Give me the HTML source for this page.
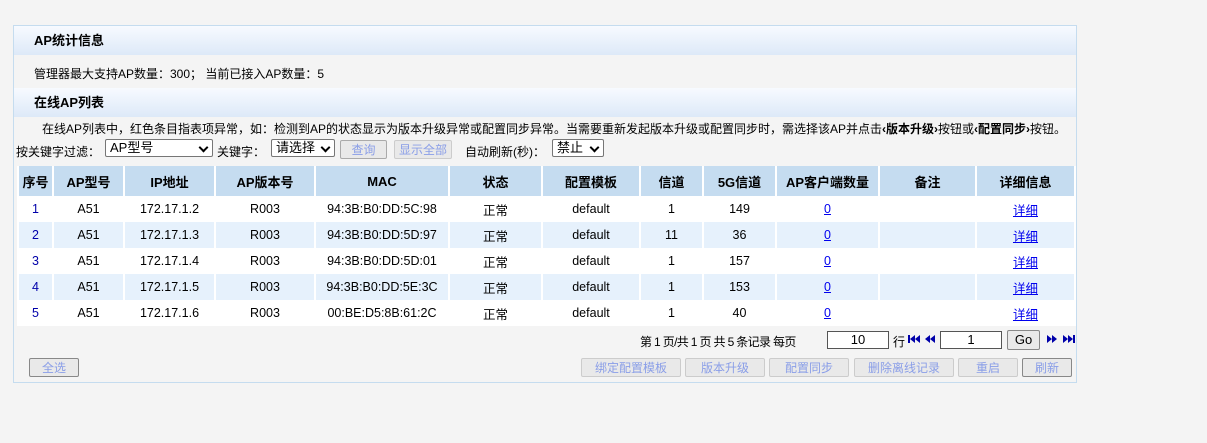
<!DOCTYPE html>
<html><head><meta charset="utf-8"><style>
body{margin:0;background:#f4f4f4;font-family:"Liberation Sans","Noto Sans CJK SC",sans-serif;font-size:12px;color:#000;width:1207px;height:443px;overflow:hidden;position:relative}
.panel{position:absolute;left:13px;top:25px;width:1062px;height:356px;border:1px solid #c5dcef;background:#f4f4f4}
.hd{position:absolute;left:0;width:1062px;height:29px;background:linear-gradient(#f7faff,#dde9f8);font-weight:bold;font-size:13px;line-height:30px;padding-left:20px;box-sizing:border-box}
.t{position:absolute;white-space:nowrap}
table{position:absolute;left:3px;top:140px;width:1059px;border-collapse:collapse;table-layout:fixed}
th{background:#c5dcf0;height:30px;font-size:13px;border-left:2px solid #fff;border-right:2px solid #fff;padding:0}
td{height:26px;text-align:center;border-left:2px solid #fff;border-right:2px solid #fff;padding:0;background:#fff;font-size:12.5px}
tr.a td{background:#e6f1fc}
a{color:#00e;text-decoration:underline}
.n{color:#00a}
.sel{position:absolute;height:18px;border:1px solid #767676;background:#fff;border-radius:2px;box-sizing:border-box;font-size:13px;line-height:16px;padding-left:4px}
.sel:after{content:"";position:absolute;right:5px;top:4px;width:5px;height:5px;border-right:2px solid #000;border-bottom:2px solid #000;transform:rotate(45deg)}
.btn{position:absolute;height:19px;border:1px solid #aaa;background:#e9e9e9;border-radius:2px;color:#8a9ee8;text-align:center;line-height:18px;box-sizing:border-box;font-size:12px}
.inp{position:absolute;height:18px;border:1px solid #555;background:#fff;text-align:center;line-height:16px;box-sizing:border-box;font-size:13px}
svg{position:absolute}
</style></head><body>
<div class="panel">
<div class="hd" style="top:0">AP统计信息</div>
<div class="t" style="left:20px;top:39px">管理器最大支持AP数量：300；&nbsp;当前已接入AP数量：5</div>
<div class="hd" style="top:62px;border-top:none">在线AP列表</div>
<div class="t" style="left:28px;top:94px">在线AP列表中，红色条目指表项异常，如：检测到AP的状态显示为版本升级异常或配置同步异常。当需要重新发起版本升级或配置同步时，需选择该AP并点击<b>‹版本升级›</b>按钮或<b>‹配置同步›</b>按钮。</div>
<div class="t" style="left:2px;top:117px">按关键字过滤：</div>
<div class="sel" style="left:91px;top:113px;width:108px">AP型号</div>
<div class="t" style="left:203px;top:117px">关键字：</div>
<div class="sel" style="left:257px;top:113px;width:64px">请选择</div>
<div class="btn" style="left:326px;top:114px;width:47px">查询</div>
<div class="btn" style="left:380px;top:114px;width:58px;border-color:#ccc">显示全部</div>
<div class="t" style="left:451px;top:117px">自动刷新(秒)：</div>
<div class="sel" style="left:538px;top:113px;width:52px">禁止</div>
<table>
<colgroup><col style="width:35px"><col style="width:71px"><col style="width:91px"><col style="width:100px"><col style="width:134px"><col style="width:93px"><col style="width:98px"><col style="width:63px"><col style="width:73px"><col style="width:103px"><col style="width:97px"><col></colgroup>
<tr><th>序号</th><th>AP型号</th><th>IP地址</th><th>AP版本号</th><th>MAC</th><th>状态</th><th>配置模板</th><th>信道</th><th>5G信道</th><th>AP客户端数量</th><th>备注</th><th>详细信息</th></tr>
<tr><td class="n">1</td><td>A51</td><td>172.17.1.2</td><td>R003</td><td>94:3B:B0:DD:5C:98</td><td>正常</td><td>default</td><td>1</td><td>149</td><td><a>0</a></td><td></td><td><a>详细</a></td></tr>
<tr class="a"><td class="n">2</td><td>A51</td><td>172.17.1.3</td><td>R003</td><td>94:3B:B0:DD:5D:97</td><td>正常</td><td>default</td><td>11</td><td>36</td><td><a>0</a></td><td></td><td><a>详细</a></td></tr>
<tr><td class="n">3</td><td>A51</td><td>172.17.1.4</td><td>R003</td><td>94:3B:B0:DD:5D:01</td><td>正常</td><td>default</td><td>1</td><td>157</td><td><a>0</a></td><td></td><td><a>详细</a></td></tr>
<tr class="a"><td class="n">4</td><td>A51</td><td>172.17.1.5</td><td>R003</td><td>94:3B:B0:DD:5E:3C</td><td>正常</td><td>default</td><td>1</td><td>153</td><td><a>0</a></td><td></td><td><a>详细</a></td></tr>
<tr><td class="n">5</td><td>A51</td><td>172.17.1.6</td><td>R003</td><td>00:BE:D5:8B:61:2C</td><td>正常</td><td>default</td><td>1</td><td>40</td><td><a>0</a></td><td></td><td><a>详细</a></td></tr>
</table>
<div class="t" style="left:626px;top:307px;letter-spacing:-0.65px">第 1 页/共 1 页 共 5 条记录 每页</div>
<div class="inp" style="left:813px;top:305px;width:62px">10</div>
<div class="t" style="left:879px;top:307px">行</div>
<svg style="left:893px;top:308px" width="30" height="10"><path d="M1 1h2v8H1zM8 1v8L3 5zM13 1v8L8 5zM23 1v8L18 5zM28 1v8L23 5z" fill="#00a"/></svg>
<div class="inp" style="left:926px;top:305px;width:62px">1</div>
<div class="btn" style="left:993px;top:304px;width:33px;height:20px;color:#000;border-color:#888;font-size:13px">Go</div>
<svg style="left:1033px;top:308px" width="30" height="10"><path d="M0 1v8l5-4zM5 1v8l5-4zM16 1v8l5-4zM21 1v8l5-4zM26 1h2v8h-2z" fill="#00a"/></svg>
<div class="btn" style="left:15px;top:332px;width:50px;border-color:#888">全选</div>
<div class="btn" style="left:567px;top:332px;width:100px;border-color:#ccc">绑定配置模板</div>
<div class="btn" style="left:671px;top:332px;width:80px;border-color:#ccc">版本升级</div>
<div class="btn" style="left:755px;top:332px;width:80px;border-color:#ccc">配置同步</div>
<div class="btn" style="left:840px;top:332px;width:100px;border-color:#ccc">删除离线记录</div>
<div class="btn" style="left:944px;top:332px;width:60px;border-color:#ccc">重启</div>
<div class="btn" style="left:1008px;top:332px;width:50px;border-color:#888">刷新</div>
</div>
</body></html>
